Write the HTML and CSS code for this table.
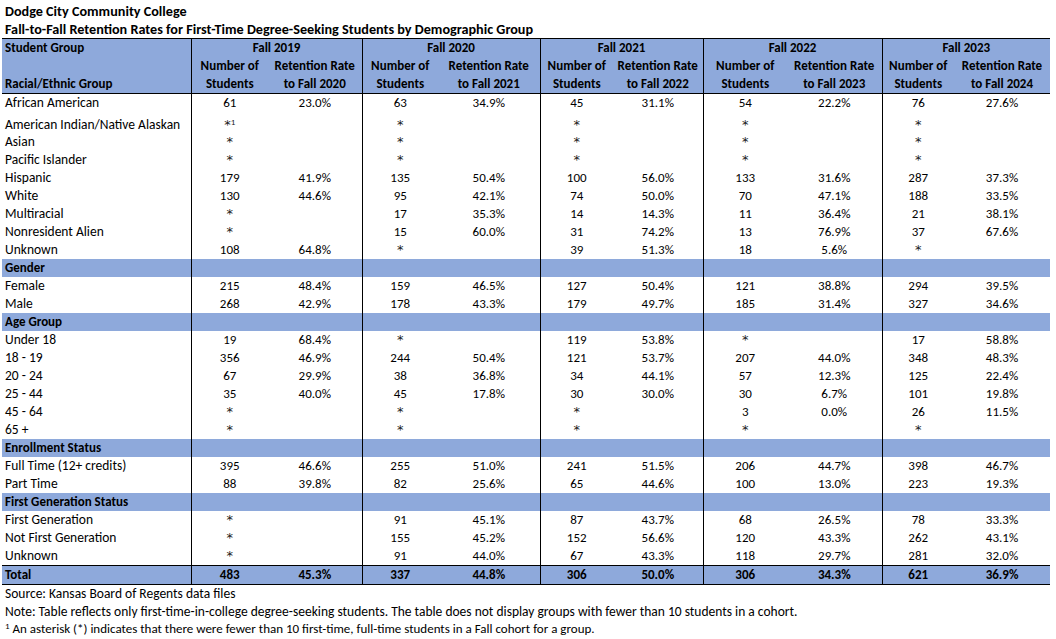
FILE: index.html
```html
<!DOCTYPE html>
<html lang="en">
<head>
<meta charset="utf-8">
<title>Dodge City Community College – Fall-to-Fall Retention Rates</title>
<link rel="stylesheet" href="styles.css">
</head>
<body>
<div class="page">
  <div class="title">Dodge City Community College</div>
  <div class="title">Fall-to-Fall Retention Rates for First-Time Degree-Seeking Students by Demographic Group</div>
  <table class="grid">
    <colgroup>
      <col class="c-lbl">
      <col class="c19n"><col class="c19r">
      <col class="c20n"><col class="c20r">
      <col class="c21n"><col class="c21r">
      <col class="c22n"><col class="c22r">
      <col class="c23n"><col class="c23r">
    </colgroup>
    <thead>
      <tr class="h1">
        <th class="lbl">Student Group</th>
        <th colspan="2" class="sep">Fall 2019</th>
        <th colspan="2" class="sep">Fall 2020</th>
        <th colspan="2" class="sep">Fall 2021</th>
        <th colspan="2" class="sep">Fall 2022</th>
        <th colspan="2">Fall 2023</th>
      </tr>
      <tr class="h2">
        <th class="lbl"></th>
        <th>Number of</th><th class="sep">Retention Rate</th>
        <th>Number of</th><th class="sep">Retention Rate</th>
        <th>Number of</th><th class="sep">Retention Rate</th>
        <th>Number of</th><th class="sep">Retention Rate</th>
        <th>Number of</th><th>Retention Rate</th>
      </tr>
      <tr class="h3">
        <th class="lbl">Racial/Ethnic Group</th>
        <th>Students</th><th class="sep">to Fall 2020</th>
        <th>Students</th><th class="sep">to Fall 2021</th>
        <th>Students</th><th class="sep">to Fall 2022</th>
        <th>Students</th><th class="sep">to Fall 2023</th>
        <th>Students</th><th>to Fall 2024</th>
      </tr>
    </thead>
    <tbody>
      <tr><td class="lbl">African American</td><td>61</td><td class="sep">23.0%</td><td>63</td><td class="sep">34.9%</td><td>45</td><td class="sep">31.1%</td><td>54</td><td class="sep">22.2%</td><td>76</td><td>27.6%</td></tr>
      <tr class="tall"><td class="lbl">American Indian/Native Alaskan</td><td class="ast">*<sup>1</sup></td><td class="sep"></td><td class="ast">*</td><td class="sep"></td><td class="ast">*</td><td class="sep"></td><td class="ast">*</td><td class="sep"></td><td class="ast">*</td><td></td></tr>
      <tr><td class="lbl">Asian</td><td class="ast">*</td><td class="sep"></td><td class="ast">*</td><td class="sep"></td><td class="ast">*</td><td class="sep"></td><td class="ast">*</td><td class="sep"></td><td class="ast">*</td><td></td></tr>
      <tr><td class="lbl">Pacific Islander</td><td class="ast">*</td><td class="sep"></td><td class="ast">*</td><td class="sep"></td><td class="ast">*</td><td class="sep"></td><td class="ast">*</td><td class="sep"></td><td class="ast">*</td><td></td></tr>
      <tr><td class="lbl">Hispanic</td><td>179</td><td class="sep">41.9%</td><td>135</td><td class="sep">50.4%</td><td>100</td><td class="sep">56.0%</td><td>133</td><td class="sep">31.6%</td><td>287</td><td>37.3%</td></tr>
      <tr><td class="lbl">White</td><td>130</td><td class="sep">44.6%</td><td>95</td><td class="sep">42.1%</td><td>74</td><td class="sep">50.0%</td><td>70</td><td class="sep">47.1%</td><td>188</td><td>33.5%</td></tr>
      <tr><td class="lbl">Multiracial</td><td class="ast">*</td><td class="sep"></td><td>17</td><td class="sep">35.3%</td><td>14</td><td class="sep">14.3%</td><td>11</td><td class="sep">36.4%</td><td>21</td><td>38.1%</td></tr>
      <tr><td class="lbl">Nonresident Alien</td><td class="ast">*</td><td class="sep"></td><td>15</td><td class="sep">60.0%</td><td>31</td><td class="sep">74.2%</td><td>13</td><td class="sep">76.9%</td><td>37</td><td>67.6%</td></tr>
      <tr><td class="lbl">Unknown</td><td>108</td><td class="sep">64.8%</td><td class="ast">*</td><td class="sep"></td><td>39</td><td class="sep">51.3%</td><td>18</td><td class="sep">5.6%</td><td class="ast">*</td><td></td></tr>

      <tr class="band"><td class="lbl">Gender</td><td></td><td class="sep"></td><td></td><td class="sep"></td><td></td><td class="sep"></td><td></td><td class="sep"></td><td></td><td></td></tr>
      <tr><td class="lbl">Female</td><td>215</td><td class="sep">48.4%</td><td>159</td><td class="sep">46.5%</td><td>127</td><td class="sep">50.4%</td><td>121</td><td class="sep">38.8%</td><td>294</td><td>39.5%</td></tr>
      <tr><td class="lbl">Male</td><td>268</td><td class="sep">42.9%</td><td>178</td><td class="sep">43.3%</td><td>179</td><td class="sep">49.7%</td><td>185</td><td class="sep">31.4%</td><td>327</td><td>34.6%</td></tr>

      <tr class="band"><td class="lbl">Age Group</td><td></td><td class="sep"></td><td></td><td class="sep"></td><td></td><td class="sep"></td><td></td><td class="sep"></td><td></td><td></td></tr>
      <tr><td class="lbl">Under 18</td><td>19</td><td class="sep">68.4%</td><td class="ast">*</td><td class="sep"></td><td>119</td><td class="sep">53.8%</td><td class="ast">*</td><td class="sep"></td><td>17</td><td>58.8%</td></tr>
      <tr><td class="lbl">18 - 19</td><td>356</td><td class="sep">46.9%</td><td>244</td><td class="sep">50.4%</td><td>121</td><td class="sep">53.7%</td><td>207</td><td class="sep">44.0%</td><td>348</td><td>48.3%</td></tr>
      <tr><td class="lbl">20 - 24</td><td>67</td><td class="sep">29.9%</td><td>38</td><td class="sep">36.8%</td><td>34</td><td class="sep">44.1%</td><td>57</td><td class="sep">12.3%</td><td>125</td><td>22.4%</td></tr>
      <tr><td class="lbl">25 - 44</td><td>35</td><td class="sep">40.0%</td><td>45</td><td class="sep">17.8%</td><td>30</td><td class="sep">30.0%</td><td>30</td><td class="sep">6.7%</td><td>101</td><td>19.8%</td></tr>
      <tr><td class="lbl">45 - 64</td><td class="ast">*</td><td class="sep"></td><td class="ast">*</td><td class="sep"></td><td class="ast">*</td><td class="sep"></td><td>3</td><td class="sep">0.0%</td><td>26</td><td>11.5%</td></tr>
      <tr><td class="lbl">65 +</td><td class="ast">*</td><td class="sep"></td><td class="ast">*</td><td class="sep"></td><td class="ast">*</td><td class="sep"></td><td class="ast">*</td><td class="sep"></td><td class="ast">*</td><td></td></tr>

      <tr class="band"><td class="lbl">Enrollment Status</td><td></td><td class="sep"></td><td></td><td class="sep"></td><td></td><td class="sep"></td><td></td><td class="sep"></td><td></td><td></td></tr>
      <tr><td class="lbl">Full Time (12+ credits)</td><td>395</td><td class="sep">46.6%</td><td>255</td><td class="sep">51.0%</td><td>241</td><td class="sep">51.5%</td><td>206</td><td class="sep">44.7%</td><td>398</td><td>46.7%</td></tr>
      <tr><td class="lbl">Part Time</td><td>88</td><td class="sep">39.8%</td><td>82</td><td class="sep">25.6%</td><td>65</td><td class="sep">44.6%</td><td>100</td><td class="sep">13.0%</td><td>223</td><td>19.3%</td></tr>

      <tr class="band"><td class="lbl">First Generation Status</td><td></td><td class="sep"></td><td></td><td class="sep"></td><td></td><td class="sep"></td><td></td><td class="sep"></td><td></td><td></td></tr>
      <tr><td class="lbl">First Generation</td><td class="ast">*</td><td class="sep"></td><td>91</td><td class="sep">45.1%</td><td>87</td><td class="sep">43.7%</td><td>68</td><td class="sep">26.5%</td><td>78</td><td>33.3%</td></tr>
      <tr><td class="lbl">Not First Generation</td><td class="ast">*</td><td class="sep"></td><td>155</td><td class="sep">45.2%</td><td>152</td><td class="sep">56.6%</td><td>120</td><td class="sep">43.3%</td><td>262</td><td>43.1%</td></tr>
      <tr><td class="lbl">Unknown</td><td class="ast">*</td><td class="sep"></td><td>91</td><td class="sep">44.0%</td><td>67</td><td class="sep">43.3%</td><td>118</td><td class="sep">29.7%</td><td>281</td><td>32.0%</td></tr>

      <tr class="band total"><td class="lbl">Total</td><td>483</td><td class="sep">45.3%</td><td>337</td><td class="sep">44.8%</td><td>306</td><td class="sep">50.0%</td><td>306</td><td class="sep">34.3%</td><td>621</td><td>36.9%</td></tr>
    </tbody>
  </table>
  <div class="note">Source: Kansas Board of Regents data files</div>
  <div class="note">Note: Table reflects only first-time-in-college degree-seeking students. The table does not display groups with fewer than 10 students in a cohort.</div>
  <div class="note foot"><sup>1</sup> An asterisk (*) indicates that there were fewer than 10 first-time, full-time students in a Fall cohort for a group.</div>
</div>
</body>
</html>
```

FILE: styles.css
```css
body {
  margin: 0;
  background: #ffffff;
  color: #000000;
  font-family: Carlito, "Lato", "Liberation Sans", sans-serif;
  font-size: 13px;
}

.page {
  padding: 2px 0 0 2px;
}

.title {
  font-weight: bold;
  font-size: 14.2px;
  height: 18px;
  line-height: 18px;
  padding-left: 3px;
  white-space: nowrap;
}

.grid {
  border-collapse: collapse;
  table-layout: fixed;
  width: 1048px;
}

.c-lbl { width: 189px; }
.c19n { width: 77px; }
.c19r { width: 94px; }
.c20n { width: 76px; }
.c20r { width: 102px; }
.c21n { width: 73px; }
.c21r { width: 90px; }
.c22n { width: 84px; }
.c22r { width: 95px; }
.c23n { width: 72px; }
.c23r { width: 96px; }

.grid th,
.grid td {
  padding: 0;
  height: 18px;
  line-height: 18px;
  white-space: nowrap;
  text-align: center;
  vertical-align: middle;
  font-weight: normal;
}

.grid th {
  background: #8ea9db;
  font-weight: bold;
}

.grid .lbl {
  text-align: left;
  padding-left: 3px;
  border-right: 1px solid #000;
}

.grid tbody tr:not(.band) .lbl {
  font-size: 13.5px;
}

.grid .sep {
  border-right: 1px solid #000;
}

.h1 th {
  border-top: 1px solid #000;
  height: 16px;
}

.h3 th {
  border-bottom: 1px solid #000;
  height: 17px;
}

.band td {
  background: #8ea9db;
  font-weight: bold;
}

.total td {
  border-top: 1px solid #000;
  border-bottom: 1px solid #000;
  height: 17px;
}

.grid .tall td {
  height: 21px;
  line-height: 17px;
  vertical-align: bottom;
}

.grid .ast {
  font-family: "DejaVu Sans", sans-serif;
  font-size: 13px;
  color: #1a1a1a;
}

.grid .ast sup {
  font-family: Carlito, "Lato", sans-serif;
  font-size: 9px;
}

sup {
  font-size: 9px;
  line-height: 0;
  vertical-align: baseline;
  position: relative;
  top: -0.5em;
}

.note {
  height: 18px;
  line-height: 18px;
  padding-left: 3px;
  font-size: 13.5px;
  white-space: nowrap;
}

.foot {
  height: 19px;
  line-height: 16px;
  font-size: 13px;
}
```
